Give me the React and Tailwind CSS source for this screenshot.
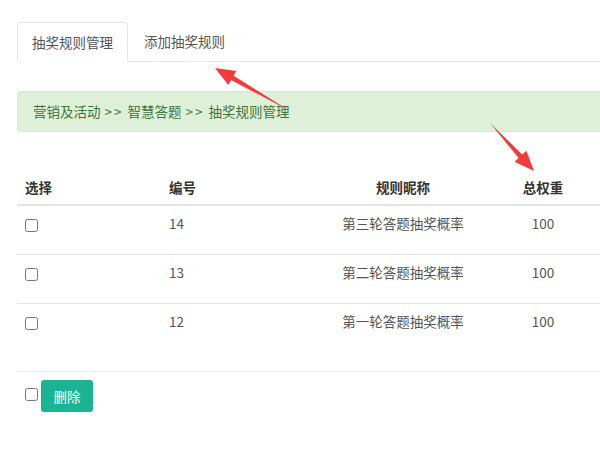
import React from 'react';

const rows = [
    { id: 14, name: '第三轮答题抽奖概率', weight: 100 },
    { id: 13, name: '第二轮答题抽奖概率', weight: 100 },
    { id: 12, name: '第一轮答题抽奖概率', weight: 100 },
];

const cols = 'grid grid-cols-[144px_139px_206px_74px_1fr]';

// red annotation arrow drawn from tail to tip
const Arrow = ({ x1, y1, x2, y2 }) => {
    const dx = x2 - x1;
    const dy = y2 - y1;
    const len = Math.hypot(dx, dy);
    const ux = dx / len;
    const uy = dy / len;
    const head = 20;
    const hw = 8;
    const bx = x2 - ux * head;
    const by = y2 - uy * head;
    const px = -uy;
    const py = ux;
    const pts = `${x1},${y1} ${bx + px * 2.5},${by + py * 2.5} ${bx + px * hw},${by + py * hw} ${x2},${y2} ${bx - px * hw},${by - py * hw} ${bx - px * 2.5},${by - py * 2.5}`;
    return <polygon points={pts} fill="#f43a3a" />;
};

const Sep = () => <span className="mx-[4px] tracking-[2px]">&gt;&gt;</span>;

const App = () => {
    return (
        <div className="relative w-[600px] h-[455px] overflow-hidden bg-white text-[13.5px] text-[#555]" style={{ fontFamily: '"Noto Sans CJK SC", "Noto Sans", sans-serif' }}>
            <div className="ml-[17px] w-[640px] pt-[22px]">
                {/* tabs */}
                <div className="flex h-[40px] border-b border-[#e5e5e5]">
                    <div className="-mb-px flex items-center px-[14px] bg-white border border-[#e5e5e5] border-b-white rounded-t-[4px]">
                        抽奖规则管理
                    </div>
                    <div className="flex items-center px-[16px]">添加抽奖规则</div>
                </div>

                {/* breadcrumb */}
                <div className="mt-[29px] h-[41px] flex items-center pl-[15px] pb-px bg-[#dff0d8] border border-[#d6e9c6] rounded-l-[4px] text-[#3c763d]">
                    营销及活动<Sep />智慧答题<Sep />抽奖规则管理
                </div>

                {/* table */}
                <div className="mt-[39px]">
                    <div className={`${cols} h-[35px] items-center border-b-2 border-[#e3e3e3] font-bold text-[#333]`}>
                        <div className="pl-[8px]">选择</div>
                        <div className="pl-[8px]">编号</div>
                        <div className="text-center">规则昵称</div>
                        <div className="text-center">总权重</div>
                        <div />
                    </div>
                    {rows.map((row, i) => (
                        <div key={row.id} className={`${cols} h-[49px] pt-[7px] ${i < rows.length - 1 ? 'border-b border-[#e3e3e3]' : ''}`}>
                            <div className="pl-[8px] pt-[3px]">
                                <input type="checkbox" className="m-0 w-[13px] h-[13px]" />
                            </div>
                            <div className="pl-[8px]">{row.id}</div>
                            <div className="text-center">{row.name}</div>
                            <div className="text-center">{row.weight}</div>
                            <div />
                        </div>
                    ))}
                </div>

                {/* footer */}
                <div className="mt-[18px] border-t border-[#ebebeb] pt-[8px] flex items-start">
                    <input type="checkbox" className="ml-[8px] mt-[8px] w-[13px] h-[13px]" />
                    <button className="ml-[3px] w-[52px] h-[32px] rounded-[3px] bg-[#1ab394] text-white">删除</button>
                </div>
            </div>

            <svg className="absolute inset-0 pointer-events-none" width="600" height="455">
                <Arrow x1={290} y1={111} x2={215} y2={68} />
                <Arrow x1={490} y1={123} x2={534} y2={171} />
            </svg>
        </div>
    );
};

export default App;
